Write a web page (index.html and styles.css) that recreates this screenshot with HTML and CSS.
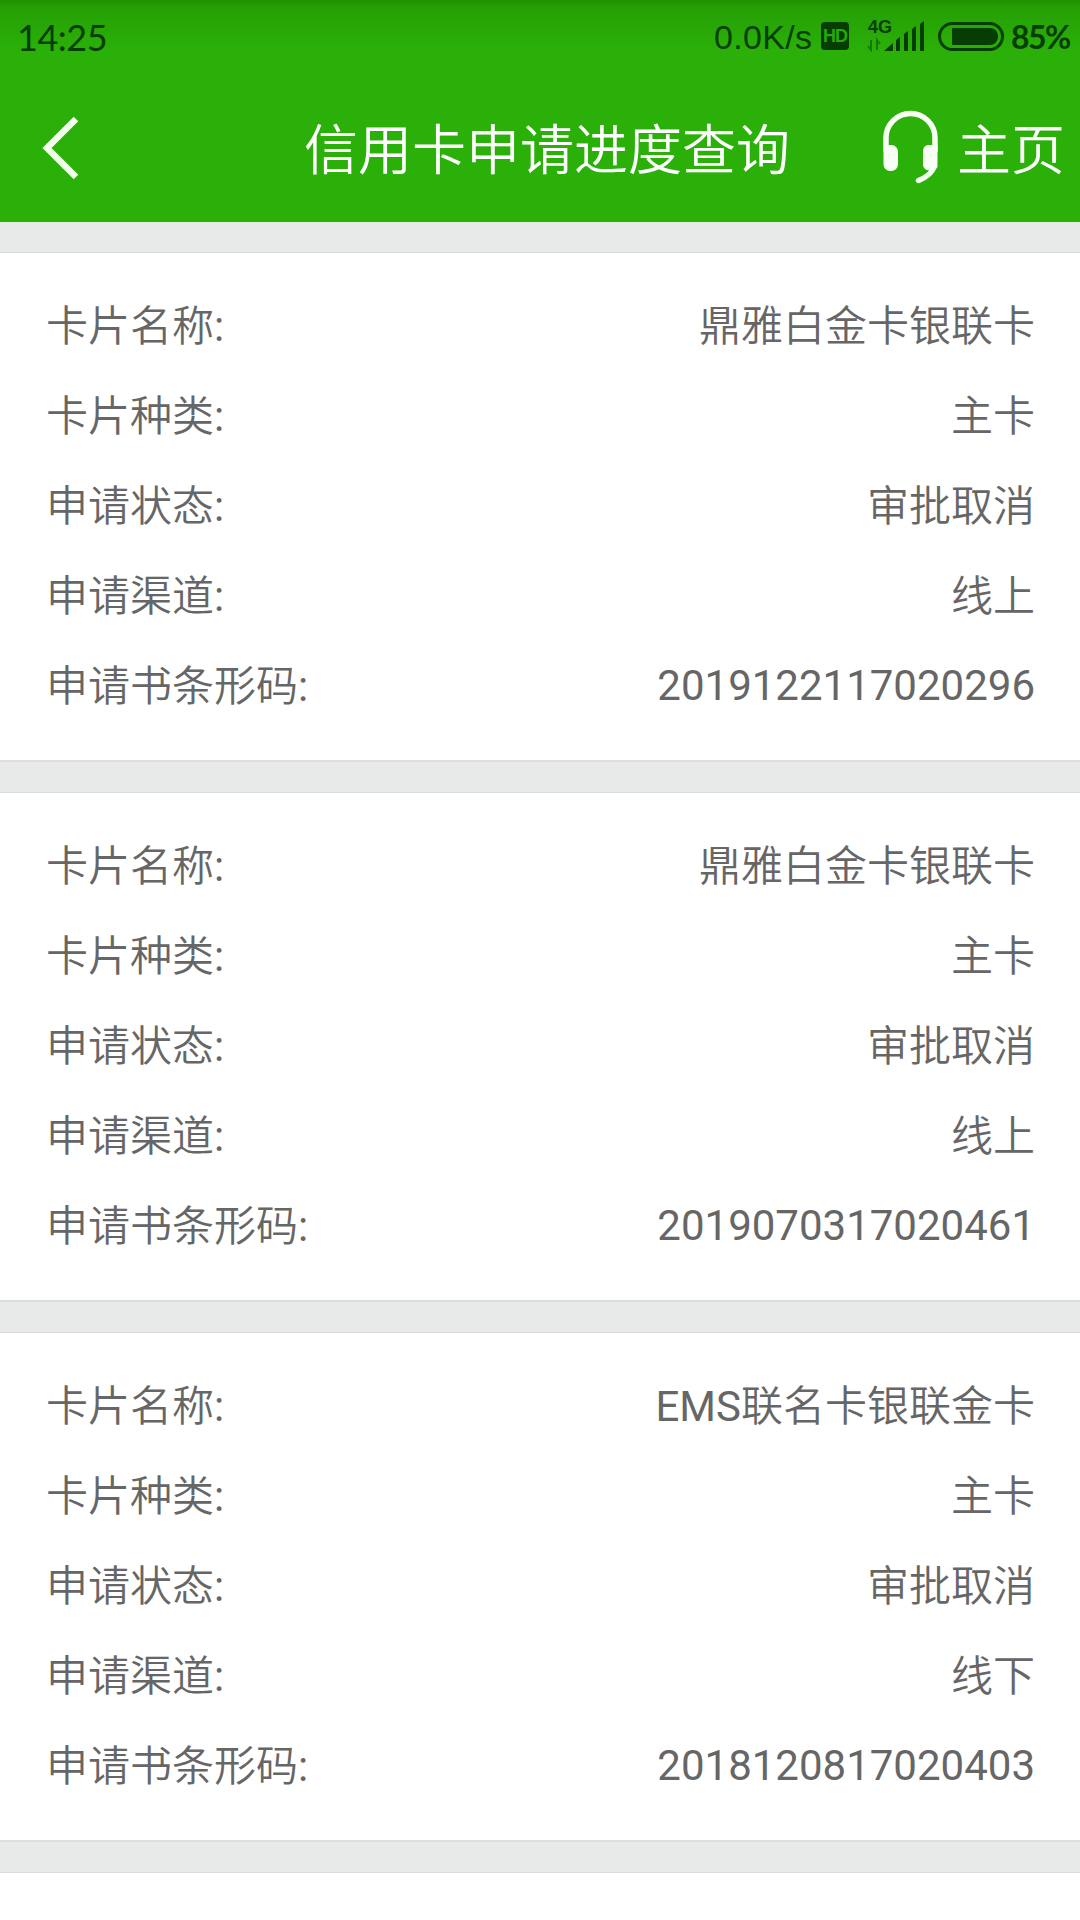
FILE: index.html
```html
<!DOCTYPE html>
<html lang="zh-CN">
<head>
  <meta charset="UTF-8" />
  <meta name="viewport" content="width=device-width, initial-scale=1.0"/>
  <title>信用卡申请进度查询</title>
  <link rel="stylesheet" href="styles.css">
</head>
<body>

  <header class="top">
    <div class="status-bar">
      <span class="time">14:25</span>
      <span class="speed">0.0K/s</span>
      <span class="hd">HD</span>
      <div class="network">
        <span class="network-type">4G</span>
        <svg class="signal" width="58" height="32" viewBox="0 0 58 32">
          <path class="arrows" d="M4 20v10l-3-4M10 30V20l3 4" />
          <path d="M17 31l9-8v8zM29 20l4-3v14h-4zM37 14l4-3v20h-4zM45 9l4-3v25h-4zM53 4l4-3v30h-4z" />
        </svg>
      </div>
      <svg class="battery" width="66" height="30" viewBox="0 0 66 30">
        <rect class="battery-frame" x="1.5" y="1.5" width="63" height="26" rx="13" />
        <path d="M14 6h38c5 0 8 4 8 8.500s-3 8.500-8 8.500H14z" />
      </svg>
      <span class="percent">85%</span>
    </div>

    <div class="nav-bar">
      <a class="back" href="#">
        <svg width="40" height="64" viewBox="0 0 40 64">
          <path d="M35 3L6 32l29 29" />
        </svg>
      </a>
      <h1>信用卡申请进度查询</h1>
      <a class="service" href="#">
        <svg width="56" height="74" viewBox="0 0 56 74">
          <path class="band" d="M3 40V28a24.500 24.500 0 0 1 49 0v12" />
          <rect x="0.500" y="35" width="14.500" height="26" rx="6.500" />
          <path d="M46 35h8.500v22l-3 3.500h-5c-4.500 0-6.500-3-6.500-6.500V41.500c0-4 2-6.500 6-6.500z" />
          <path class="mic" d="M51 57c-2 6-7 10-15.500 13.500" />
        </svg>
      </a>
      <a class="home" href="#">主页</a>
    </div>
  </header>

  <main class="list">
    <section class="card">
      <div class="row"><span>卡片名称<b>:</b></span><span>鼎雅白金卡银联卡</span></div>
      <div class="row"><span>卡片种类<b>:</b></span><span>主卡</span></div>
      <div class="row"><span>申请状态<b>:</b></span><span>审批取消</span></div>
      <div class="row"><span>申请渠道<b>:</b></span><span>线上</span></div>
      <div class="row"><span>申请书条形码<b>:</b></span><span class="code">2019122117020296</span></div>
    </section>

    <section class="card">
      <div class="row"><span>卡片名称<b>:</b></span><span>鼎雅白金卡银联卡</span></div>
      <div class="row"><span>卡片种类<b>:</b></span><span>主卡</span></div>
      <div class="row"><span>申请状态<b>:</b></span><span>审批取消</span></div>
      <div class="row"><span>申请渠道<b>:</b></span><span>线上</span></div>
      <div class="row"><span>申请书条形码<b>:</b></span><span class="code">2019070317020461</span></div>
    </section>

    <section class="card">
      <div class="row"><span>卡片名称<b>:</b></span><span><b>EMS</b>联名卡银联金卡</span></div>
      <div class="row"><span>卡片种类<b>:</b></span><span>主卡</span></div>
      <div class="row"><span>申请状态<b>:</b></span><span>审批取消</span></div>
      <div class="row"><span>申请渠道<b>:</b></span><span>线下</span></div>
      <div class="row"><span>申请书条形码<b>:</b></span><span class="code">2018120817020403</span></div>
    </section>

    <section class="card next"></section>
  </main>

</body>
</html>
```
FILE: styles.css
```css
* {
  box-sizing: border-box;
}

body {
  margin: 0;
  height: 1920px;
  overflow: hidden;
  display: flex;
  flex-direction: column;
  background-color: #e8eaea;
  font-family: Roboto, "Noto Sans CJK SC", sans-serif;
  color: #666;
}

.top {
  flex: none;
  height: 222px;
  background: linear-gradient(to bottom, #219000 0, #269f05 8px, #2ab009 50px);
}

.status-bar {
  display: flex;
  align-items: center;
  height: 74px;
  padding-left: 17px;
  color: #063d02;
  fill: #063d02;
}

.status-bar > * {
  flex: none;
}

.time {
  width: 697px;
  font-family: Lato, sans-serif;
  font-size: 36px;
  letter-spacing: -0.5px;
}

.speed {
  width: 107px;
  font-family: "Liberation Sans", sans-serif;
  font-size: 34px;
  letter-spacing: 0.3px;
}

.hd {
  width: 28px;
  height: 28px;
  margin-top: -2px;
  margin-right: 19px;
  border-radius: 4px;
  background-color: #063d02;
  color: #2aa80a;
  font: bold 18px/29px "Liberation Sans", sans-serif;
  text-align: center;
  letter-spacing: -1px;
}

.network {
  display: grid;
  width: 70px;
  height: 34px;
  margin-top: -4px;
}

.network-type,
.signal {
  grid-area: 1 / 1;
}

.network-type {
  font: bold 18px/18px "Liberation Sans", sans-serif;
}

.arrows {
  fill: none;
  stroke: #17780a;
  stroke-width: 2;
}

.signal {
  align-self: end;
  margin-left: -1px;
}

.battery {
  margin-right: 7px;
}

.battery-frame {
  fill: none;
  stroke: #063d02;
  stroke-width: 3;
}

.percent {
  margin-top: -2px;
  font-family: Lato, sans-serif;
  font-size: 32px;
  font-weight: bold;
  letter-spacing: -1.5px;
}

.nav-bar {
  display: flex;
  align-items: center;
  height: 144px;
  color: #fff;
}

.nav-bar a {
  color: inherit;
  text-decoration: none;
}

.nav-bar svg {
  display: block;
}

.back {
  width: 304px;
  padding-top: 3px;
  padding-left: 41px;
}

.back path {
  fill: none;
  stroke: #f2ffea;
  stroke-width: 6.5;
}

h1 {
  width: 579px;
  margin: 0;
  font-size: 54px;
  font-weight: 350;
}

.service {
  width: 74px;
  padding-top: 2px;
  fill: #f8fff4;
}

.band,
.mic {
  fill: none;
  stroke: #f8fff4;
  stroke-width: 5.5;
  stroke-linecap: round;
}

.home {
  font-size: 54px;
  font-weight: 350;
}

.list {
  flex: 1;
  display: flex;
  flex-direction: column;
  gap: 30px;
  padding-top: 30px;
}

.card {
  flex: none;
  height: 510px;
  padding: 28px 45px 28px 46px;
  background-color: #fff;
  border-top: 1px solid #d9dbdb;
  border-bottom: 2px solid #dcdede;
}

/* only the top edge of the next card is visible */
.next {
  flex: 1;
  height: auto;
  padding: 0;
  border-bottom: none;
}

.row {
  display: flex;
  justify-content: space-between;
  height: 90px;
  font-size: 42px;
  font-weight: 350;
  line-height: 91px;
}

.code {
  line-height: 90px;
}

.row b,
.code {
  font-weight: 400;
}
```
